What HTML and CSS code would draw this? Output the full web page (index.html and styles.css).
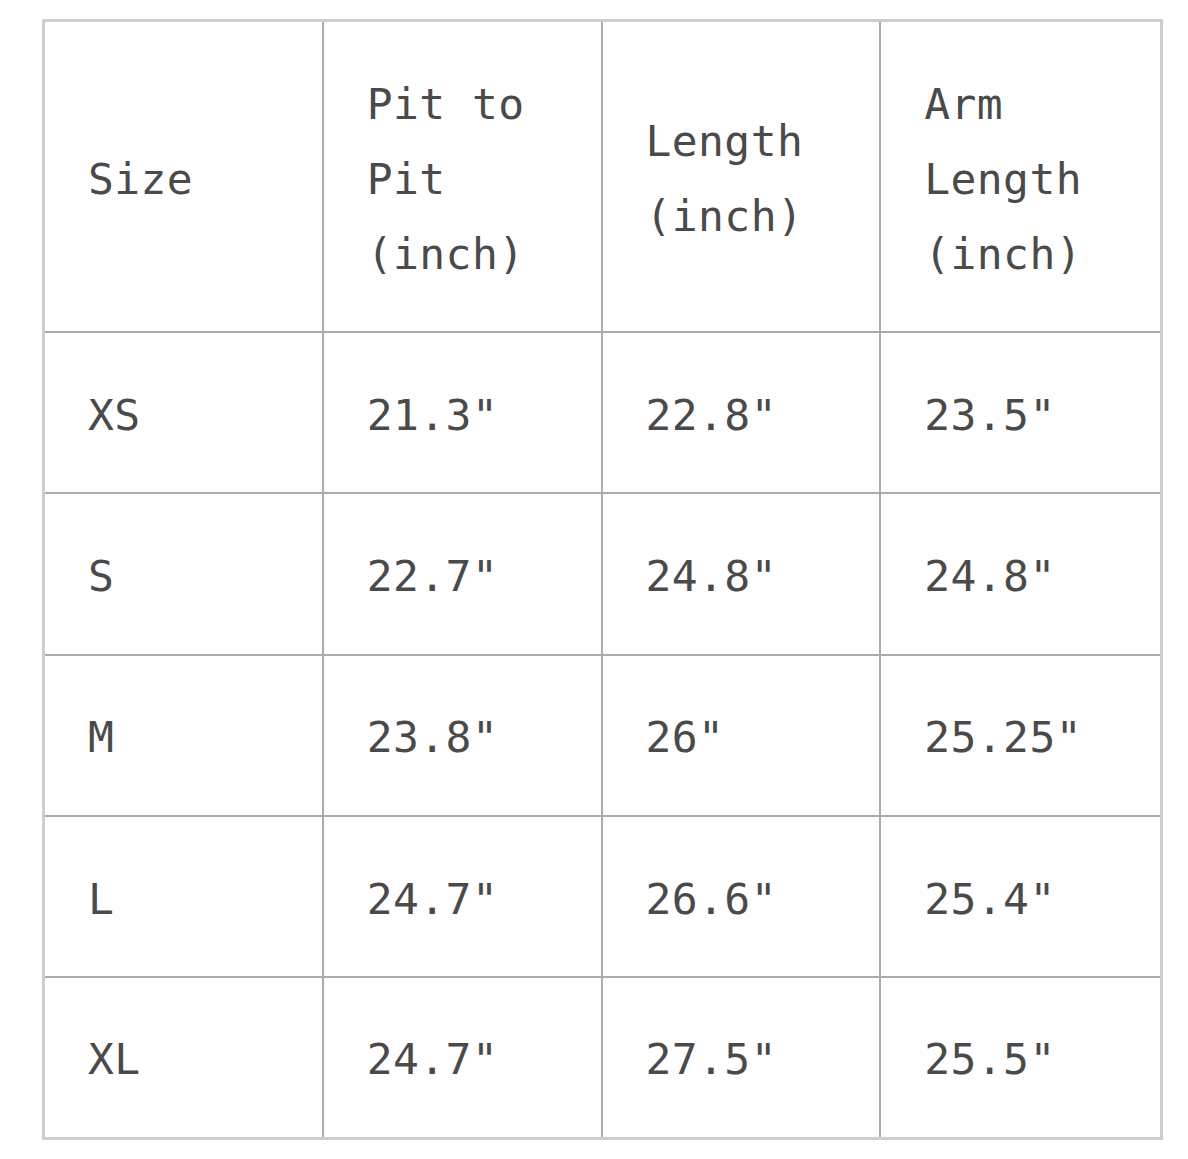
FILE: index.html
```html
<!DOCTYPE html>
<html>
<head>
<meta charset="utf-8">
<link rel="stylesheet" href="styles.css">
</head>
<body>
<table class="size-table">
  <colgroup><col class="c"><col class="c"><col class="c"><col class="c"></colgroup>
  <tr class="head"><td>Size</td><td>Pit to Pit (inch)</td><td>Length (inch)</td><td>Arm Length (inch)</td></tr>
  <tr class="row"><td>XS</td><td>21.3"</td><td>22.8"</td><td>23.5"</td></tr>
  <tr class="row"><td>S</td><td>22.7"</td><td>24.8"</td><td>24.8"</td></tr>
  <tr class="row"><td>M</td><td>23.8"</td><td>26"</td><td>25.25"</td></tr>
  <tr class="row"><td>L</td><td>24.7"</td><td>26.6"</td><td>25.4"</td></tr>
  <tr class="row last"><td>XL</td><td>24.7"</td><td>27.5"</td><td>25.5"</td></tr>
</table>
</body>
</html>
```
FILE: styles.css
```css
html, body { margin: 0; padding: 0; background: #fff; }
body { padding: 19px 0 0 42px; }
.size-table {
  border-collapse: separate;
  border-spacing: 0;
  border: 3px solid #cdcdcd;
  width: 1121px;
  table-layout: fixed;
  font-family: "DejaVu Sans Mono", "Liberation Mono", monospace;
  font-size: 43px;
  letter-spacing: 0.4px;
  color: #4a4a4a;
}
.size-table td {
  padding: 5px 43px 0 43px;
  line-height: 75px;
  vertical-align: middle;
  border-right: 2.5px solid #ababab;
  border-bottom: 2.5px solid #ababab;
  text-align: left;
}
.size-table td:last-child { border-right: none; }
.size-table .last td { border-bottom: none; }
.head { height: 311px; }
.row { height: 161.3px; }
.row.last { height: 158.5px; }
```
